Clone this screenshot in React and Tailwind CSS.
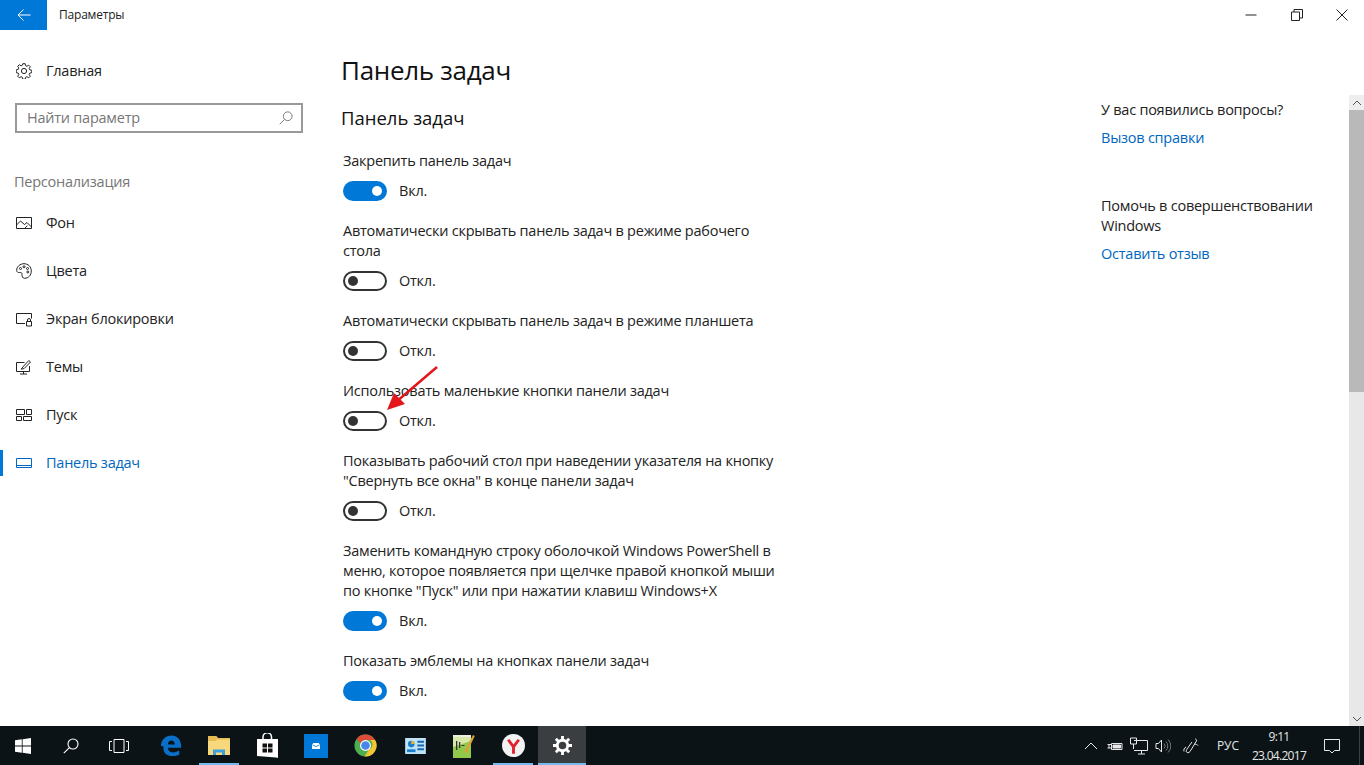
import React from 'react';

const font = "font-['Open_Sans','Noto_Sans',sans-serif]";
const body = 'text-[14.5px] tracking-[-0.24px]';

function Line({ d, size = 16, box = 16, className = '', sw = 1 }) {
  return (
    <svg width={size} height={size} viewBox={`0 0 ${box} ${box}`} fill="none" stroke="currentColor" strokeWidth={sw} className={className}>
      <path d={d} />
    </svg>
  );
}

const GearThin = () => (
  <svg width="16" height="16" viewBox="0 0 16 16" fill="none" stroke="#222" strokeWidth="1">
    <circle cx="8" cy="8" r="2.6" />
    <path d="M6.8.7h2.4l.4 2 1.3.6 1.8-1.1 1.6 1.6-1.1 1.8.6 1.3 2 .4v2.4l-2 .4-.6 1.3 1.1 1.8-1.6 1.6-1.8-1.1-1.3.6-.4 2H6.8l-.4-2-1.3-.6-1.8 1.1-1.6-1.6 1.1-1.8-.6-1.3-2-.4V6.8l2-.4.6-1.3-1.1-1.8 1.6-1.6 1.8 1.1 1.3-.6z" />
  </svg>
);

const Search = ({ size, className }) => (
  <svg width={size} height={size} viewBox="0 0 16 16" fill="none" stroke="currentColor" strokeWidth="1.1" className={className}>
    <circle cx="10" cy="6" r="5" />
    <path d="M6.400 9.600L.8 15.200" />
  </svg>
);

const navIcons = {
  bg: <Line d="M.5 2.500h15v11H.5zM.5 10l4-4 4 3.500 2.500-2 4.500 4.500M9 13l2.500-2.500" />,
  colors: (
    <svg width="16" height="16" viewBox="0 0 16 16" fill="none" stroke="#222" strokeWidth="1">
      <path d="M8 .7C4 .7.7 3.700.7 7.300c0 2 1.600 2.400 3 2.200 1.500-.2 2.500.4 2.300 1.900-.2 1.700.6 3.900 2.500 3.900 4 0 6.800-3.200 6.800-7.200C15.300 3.700 12 .7 8 .7z" />
      <circle cx="4.500" cy="5.500" r="1" /><circle cx="8" cy="3.800" r="1" /><circle cx="11.500" cy="5.500" r="1" /><circle cx="11.800" cy="9" r="1" />
    </svg>
  ),
  lock: <Line d="M9 12.500H.5v-10h15v5M10.500 10.500h5v4.500h-5zM11.500 10.500V9a1.500 1.500 0 0 1 3 0v1.500" />,
  themes: <Line d="M13.500 7v5.500H.5v-9h8M4 15h7M7.500 12.500V15M5 10c1-.3 1.500-1 1.800-2l6-6.500 1.700 1.500-6.300 6.500c-1 .3-1.800.6-3.200.5z" />,
  start: <Line d="M.5 2.500h8v5h-8zM10.500 2.500h5v5h-5zM.5 9.500h5v4h-5zM7.500 9.500h8v4h-8z" />,
  taskbar: <Line d="M.5 3.500h15v9H.5zM.5 10.500h15" />,
};

const nav = [
  ['Фон', 'bg'],
  ['Цвета', 'colors'],
  ['Экран блокировки', 'lock'],
  ['Темы', 'themes'],
  ['Пуск', 'start'],
  ['Панель задач', 'taskbar'],
];

const settings = [
  [['Закрепить панель задач'], true],
  [['Автоматически скрывать панель задач в режиме рабочего', 'стола'], false],
  [['Автоматически скрывать панель задач в режиме планшета'], false],
  [['Использовать маленькие кнопки панели задач'], false],
  [['Показывать рабочий стол при наведении указателя на кнопку', '"Свернуть все окна" в конце панели задач'], false],
  [['Заменить командную строку оболочкой Windows PowerShell в', 'меню, которое появляется при щелчке правой кнопкой мыши', 'по кнопке "Пуск" или при нажатии клавиш Windows+X'], true],
  [['Показать эмблемы на кнопках панели задач'], true],
  [['Расположение панели задач на экране'], null],
];

function Toggle({ on }) {
  return (
    <div className="mt-[10px] flex h-5 items-center">
      {on ? (
        <div className="flex h-5 w-11 items-center justify-end rounded-full bg-[#0078d7] pr-[5px]">
          <div className="h-[10px] w-[10px] rounded-full bg-white" />
        </div>
      ) : (
        <div className="flex h-5 w-11 items-center rounded-full border-2 border-[#333] pl-[3px]">
          <div className="h-[10px] w-[10px] rounded-full bg-[#333]" />
        </div>
      )}
      <span className={`ml-3 leading-5 text-[#222] ${body}`}>{on ? 'Вкл.' : 'Откл.'}</span>
    </div>
  );
}

const Edge = () => (
  <svg width="22" height="23" viewBox="0 0 24 24" fill="none">
    <path d="M1 12C1.500 5 6.500 1 12.500 1 19 1 23 6 23 12v2.500H8.500c.3 3.500 2.500 5 5.500 5 2.500 0 5-.7 7-2v4.500c-2 1-4.500 1.500-7.300 1.500C6 23.500 3 18.500 4 13c-1 .3-2 .2-3-1zm7.500-1h7.700C16 8 14.500 6.500 12.300 6.500 10 6.500 8.800 8.500 8.500 11z" fill="#0a6fc9" />
  </svg>
);
const Folder = () => (
  <svg width="22" height="19" viewBox="0 0 22 19">
    <path d="M0 0h8l2 2h12v17H0z" fill="#f7d87c" />
    <path d="M0 0h8l2 2h12v1.500H9L7.500 5H0z" fill="#e6bd55" />
    <path d="M5 19v-5.500h12V19h-3v-2.500H8V19z" fill="#3ea0dc" />
  </svg>
);
const Store = () => (
  <svg width="21" height="25" viewBox="0 0 21 25">
    <path d="M0 6h21v19l-2-.5L0 23z" fill="#fff" />
    <path d="M6 6V4a4 4 0 0 1 8.500 0v2" fill="none" stroke="#fff" strokeWidth="1.500" />
    <path d="M5.500 10.500h4.500v4H5.500zM11 10.500h4.500v4H11zM5.500 15.500h4.500v4H5.500zM11 15.500h4.500v4H11z" fill="#111" />
  </svg>
);
const Mail = () => (
  <svg width="24" height="24" viewBox="0 0 24 24">
    <rect width="24" height="24" fill="#0078d7" />
    <path d="M8 10.500l1.500-1.500h5l1.500 1.500V15H8z" fill="#fff" />
    <path d="M8.500 11l3.500 1.500 3.500-1.500" fill="none" stroke="#0078d7" strokeWidth="0.8" />
  </svg>
);
const Chrome = () => (
  <svg width="23" height="23" viewBox="0 0 24 24">
    <circle cx="12" cy="12" r="11.500" fill="#4caf50" />
    <path d="M12 .5a11.500 11.500 0 0 1 10 5.800H12a5.700 5.700 0 0 0-5.300 3.500L2.800 5.100A11.500 11.500 0 0 1 12 .5z" fill="#dd4b39" />
    <path d="M22 6.300A11.500 11.500 0 0 1 11 23.500l4.700-7.200a5.700 5.700 0 0 0 1.200-10z" fill="#f5c533" />
    <circle cx="12" cy="12" r="5.700" fill="#fff" />
    <circle cx="12" cy="12" r="4.500" fill="#4a86e8" />
  </svg>
);
const Card = () => (
  <svg width="21" height="16" viewBox="0 0 22 17">
    <rect width="22" height="17" fill="#bfe3f7" />
    <circle cx="6.500" cy="6.500" r="3.500" fill="#1a7fd0" />
    <path d="M6.500 6.500V3A3.500 3.500 0 0 1 10 6.500z" fill="#f0b429" />
    <path d="M2 12h9v3H2z" fill="#1a7fd0" />
    <path d="M13 3h7v2h-7zM13 7h7v2h-7zM13 11h7v2h-7z" fill="#1668b0" />
  </svg>
);
const Notepad = () => (
  <svg width="22" height="24" viewBox="0 0 22 24">
    <path d="M0 1h18v23H0z" fill="#d8e8a8" />
    <path d="M0 13l18-6v17H0z" fill="#93c94a" />
    <path d="M0 1h18v2H0z" fill="#eeeede" />
    <path d="M3 7h1.300v9H3zM6 8h1.300v6H6zM8.500 11h3v1h-3z" fill="#333" />
    <path d="M11 18L20 1l1.800 1L13.500 19z" fill="#d9a33a" />
  </svg>
);
const Yandex = () => (
  <svg width="23" height="23" viewBox="0 0 24 24" fill="none">
    <circle cx="12" cy="12" r="12" fill="#f2f2f2" />
    <path d="M6.500 6l5.500 7.500L17.500 6M12 13v7.500" stroke="#e0202a" strokeWidth="3" />
  </svg>
);
const Gear = () => (
  <svg width="19" height="19" viewBox="0 0 20 20" fill="none">
    <circle cx="10" cy="10" r="5.500" stroke="#fff" strokeWidth="3" />
    <path d="M10 0v4M10 16v4M0 10h4M16 10h4M3 3l2.800 2.800M14.200 14.200L17 17M17 3l-2.800 2.800M5.800 14.200L3 17" stroke="#fff" strokeWidth="3" />
  </svg>
);

const pins = [
  [49, <Edge />, false, false],
  [48, <Folder />, true, false],
  [48, <Store />, false, false],
  [49, <Mail />, false, false],
  [51, <Chrome />, false, false],
  [48, <Card />, false, false],
  [49, <Notepad />, false, false],
  [50, <Yandex />, true, false],
  [48, <Gear />, true, true],
];

function Taskbar() {
  return (
    <div className="relative z-10 flex h-[39px] shrink-0 items-stretch bg-[#0b1316] text-[#e8e8e8]">
      <div className="flex w-[46px] items-center justify-center">
        <svg width="16" height="16" viewBox="0 0 16 16" fill="#fff"><path d="M0 2.300l6.800-1v6.300H0zM7.600 1.200L16 0v7.600H7.600zM0 8.400h6.800v6.300L0 13.700zM7.600 8.400H16V16l-8.400-1.200z" /></svg>
      </div>
      <div className="flex w-[50px] items-center justify-center text-white">
        <Search size={16} />
      </div>
      <div className="flex w-[46px] items-center justify-center">
        <Line size={20} box={20} d="M5 3.500h10v13H5zM3 5.500H.5v9H3M17 5.500h2.500v9H17" className="text-white" />
      </div>
      <div className="ml-[4px] flex">
        {pins.map(([w, icon, open, active], i) => (
          <div key={i} style={{ width: w }} className={`relative flex items-center justify-center ${active ? 'bg-[#3b3e40]' : ''}`}>
            {icon}
            {open && <div className="absolute inset-x-0 bottom-0 mx-auto h-[2px] w-10 bg-[#76b9ed]" style={active ? { width: '100%' } : undefined} />}
          </div>
        ))}
      </div>
      <div className="ml-auto flex items-center">
        <Line size={14} box={14} d="M1 10l6-6 6 6" className="text-[#e8e8e8]" />
        <svg width="16" height="16" viewBox="0 0 16 16" fill="none" stroke="#e8e8e8" className="ml-[9px]">
          <path d="M4.500 5.500h10.500v6H4.500zM.5 6.500H4M.5 10H4M2 6.500v3.500" />
          <path d="M6 7h7.500v3H6z" fill="#e8e8e8" />
        </svg>
        <svg width="18" height="18" viewBox="0 0 18 18" fill="none" stroke="#e8e8e8" className="ml-[7px]">
          <path d="M4 3.500h13.500v10H4M8 17h7M11.500 13.500V17M.5 1h6v6h-6zM3.500 7v5" />
        </svg>
        <svg width="16" height="16" viewBox="0 0 16 16" fill="none" stroke="#e8e8e8" className="ml-[7px]">
          <path d="M1 5.500h2.500L6.500 2v12l-3-3.500H1z" />
          <path d="M9 5.500a3.500 3.500 0 0 1 0 5M11 3.500a6.500 6.500 0 0 1 0 9M13 1.500a9 9 0 0 1 0 13" stroke="#777" />
        </svg>
        <svg width="16" height="16" viewBox="0 0 16 16" fill="none" stroke="#e8e8e8" className="ml-[12px]">
          <path d="M12 1c1 0 2 1 1.500 2L7 13.500c-1 1.500-3 1.500-3.500.5s-.2-2 .5-3L9 4M11 6c2 .3 3.500.5 4 1.500M3 9C1 10 .5 12 1 13.500" />
        </svg>
        <span className="ml-[14px] w-[30px] text-center text-[12px] leading-4">РУС</span>
        <div className="ml-px w-[70px] text-center text-[12px] leading-[19px] tracking-[-0.7px]">
          <div>9:11</div>
          <div>23.04.2017</div>
        </div>
        <svg width="18" height="18" viewBox="0 0 18 18" fill="none" stroke="#e8e8e8" className="ml-[9px] mr-[18px]">
          <path d="M1.500 2.500h15v11h-5l-2.500 2.500-2.500-2.500h-5z" />
        </svg>
        <div className="mr-[4px] h-full w-px bg-[#3a4043]" />
      </div>
    </div>
  );
}

export default function App() {
  return (
    <div className={`relative flex h-[765px] w-[1364px] flex-col overflow-hidden bg-white ${font}`}>
      <div className="flex min-h-0 flex-1 flex-col">
        <div className="flex h-[30px] shrink-0 items-stretch">
          <div className="flex w-[47px] items-center justify-center bg-[#0078d7] text-white">
            <Line size={14} box={14} d="M13.500 7H1M6.500 1.500L1 7l5.500 5.500" />
          </div>
          <div className="ml-3 text-[12px] leading-[29px] tracking-[-0.2px] text-[#222]">Параметры</div>
          <div className="ml-auto flex text-[#222]">
            <div className="flex w-[46px] items-center justify-center"><Line size={12} box={12} d="M.5 6h11" /></div>
            <div className="flex w-[46px] items-center justify-center"><Line size={12} box={12} d="M.5 3h8v8.500h-8zM3 3V.5h8.500V9H8.500" /></div>
            <div className="flex w-[44px] items-center justify-center"><Line size={12} box={12} d="M.5.5l11 11M11.500.5l-11 11" /></div>
          </div>
        </div>

        <div className="flex min-h-0 flex-1">
          <aside className="w-[341px] shrink-0">
            <div className={`mt-[17px] flex h-12 items-center pl-4 text-[#222] ${body}`}>
              <GearThin />
              <span className="ml-[14px]">Главная</span>
            </div>
            <div className="ml-[15px] mt-2 flex h-[30px] w-[288px] items-center justify-between border-2 border-[#999] pl-[10px] pr-2">
              <span className={`text-[#777] ${body}`}>Найти параметр</span>
              <Search size={14} className="text-[#777]" />
            </div>
            <div className={`ml-[14px] mt-[39px] leading-5 text-[#767676] ${body}`}>Персонализация</div>
            <div className="mt-[7px]">
              {nav.map(([name, icon]) => {
                const active = icon === 'taskbar';
                return (
                  <div key={name} className={`relative flex h-12 items-center pl-4 ${body} ${active ? 'text-[#0067c0]' : 'text-[#222]'}`}>
                    {active && <div className="absolute left-0 top-[11px] h-[26px] w-[3px] bg-[#0078d7]" />}
                    {navIcons[icon]}
                    <span className="ml-[14px]">{name}</span>
                  </div>
                );
              })}
            </div>
          </aside>

          <main className="w-[760px] shrink-0 overflow-hidden">
            <h1 className="mt-[20px] h-10 text-[26px] font-normal leading-10 tracking-[-0.3px] text-[#111]">Панель задач</h1>
            <h2 className="mt-[14px] text-[18.5px] font-normal leading-[28px] text-[#111]">Панель задач</h2>
            <div className="ml-[2px] mt-[19px]">
              {settings.map(([lines, on], i) => (
                <div key={i} className="mb-5">
                  {lines.map((l) => (
                    <div key={l} className={`whitespace-nowrap leading-5 text-[#222] ${body}`}>{l}</div>
                  ))}
                  {on !== null && <Toggle on={on} />}
                </div>
              ))}
            </div>
          </main>

          <section className={`w-[248px] shrink-0 pt-[70px] leading-5 ${body}`}>
            <div className="text-[#222]">У вас появились вопросы?</div>
            <div className="mt-2 text-[#0067c0]">Вызов справки</div>
            <div className="mt-[48px] text-[#222]">Помочь в совершенствовании</div>
            <div className="text-[#222]">Windows</div>
            <div className="mt-2 text-[#0067c0]">Оставить отзыв</div>
          </section>

          <div className="mt-[65px] flex w-[15px] shrink-0 flex-col bg-[#e8e8e8]">
            <div className="flex h-[15px] items-center justify-center bg-[#eee] text-[#555]">
              <Line size={10} box={10} d="M1 7l4-4 4 4" />
            </div>
            <div className="h-[282px] bg-[#b9b9b9]" />
            <div className="mt-auto flex h-[15px] items-center justify-center text-[#555]">
              <Line size={10} box={10} d="M1 3l4 4 4-4" />
            </div>
          </div>
        </div>
      </div>

      <Taskbar />

      <svg className="pointer-events-none absolute left-[380px] top-[360px]" width="64" height="56" viewBox="0 0 64 56" fill="none">
        <path d="M57 7L16 42" stroke="#e3161c" strokeWidth="2.500" />
        <path d="M7 50L14 33l11 11z" fill="#e3161c" />
      </svg>
    </div>
  );
}
